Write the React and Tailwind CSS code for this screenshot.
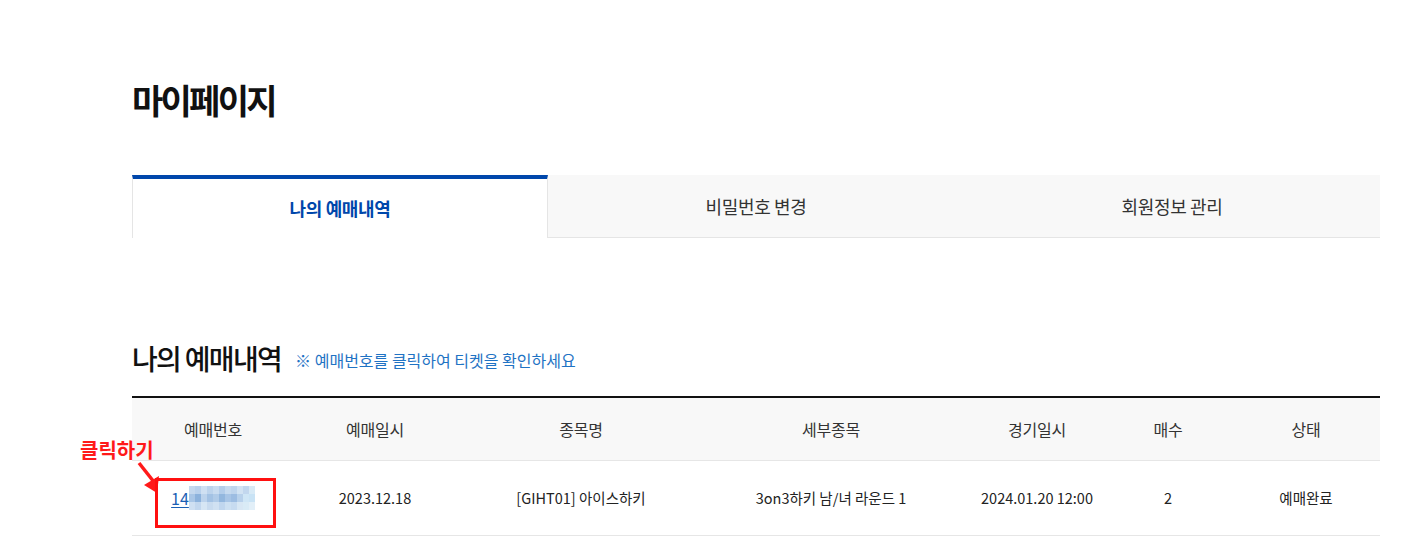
import React from "react";

const tabs = [
  { label: "나의 예매내역", active: true },
  { label: "비밀번호 변경" },
  { label: "회원정보 관리" },
];

const cols = [
  { title: "예매번호", w: "w-[162px]" },
  { title: "예매일시", w: "w-[162px]" },
  { title: "종목명", w: "w-[250px]" },
  { title: "세부종목", w: "w-[250px]" },
  { title: "경기일시", w: "w-[162px]" },
  { title: "매수", w: "w-[100px]" },
  { title: "상태", w: "w-[162px] pl-[14px]" },
];

// pixelated blur over the rest of the booking number
const mosaic = [
  ["#c4d8ee", "#b9d1ec", "#cfe0f2", "#bcd3ec", "#c9dcf0", "#b3cdea", "#c6daef", "#bfd5ed", "#d2e3f3", "#c2d7ee", "#d8eaf6"],
  ["#a9c6e6", "#8cb2dc", "#bcd3ec", "#a3c2e4", "#b0cbe8", "#93b7de", "#a8c5e6", "#9dbde2", "#b8d1eb", "#cfe6f6", "#c9e3f5"],
  ["#cfe0f2", "#c2d7ee", "#d6e6f4", "#c8dbef", "#d0e1f2", "#c0d6ee", "#cde0f2", "#c7dbf0", "#d8e7f4", "#d9ebf6", "#e2eff8"],
];

function App() {
  return (
    <div className="relative w-full h-[539px] overflow-hidden bg-white text-[#222] font-['Noto_Sans_CJK_KR','Noto_Sans',sans-serif]">
      <div className="ml-[132px] w-[1248px] pt-[75px]">
        <h1 className="text-[34px] leading-[50px] font-bold tracking-[-0.08em] text-[#111]">
          마이페이지
        </h1>

        {/* tabs */}
        <div className="mt-[50px] grid grid-cols-3 h-[63px]">
          {tabs.map((t) =>
            t.active ? (
              <div
                key={t.label}
                className="flex items-center justify-center bg-white border-t-4 border-[#0047ab] border-l border-r border-l-[#e5e5e5] border-r-[#e5e5e5] text-[18px] font-bold text-[#0047ab] tracking-[-0.02em]"
              >
                {t.label}
              </div>
            ) : (
              <div
                key={t.label}
                className="flex items-center justify-center bg-[#f8f8f8] border-b border-[#e5e5e5] text-[18px] text-[#333] tracking-[-0.02em]"
              >
                {t.label}
              </div>
            )
          )}
        </div>

        {/* section heading */}
        <div className="mt-[100px] flex items-center gap-[14px] h-[40px]">
          <h2 className="text-[28px] font-medium tracking-[-0.06em] text-[#111]">
            나의 예매내역
          </h2>
          <p className="text-[16px] text-[#1f73c4] pt-[3px]">
            ※ 예매번호를 클릭하여 티켓을 확인하세요
          </p>
        </div>

        {/* table */}
        <div className="mt-[18px] border-t-2 border-[#111]">
          <div className="flex h-[63px] bg-[#f8f8f8] border-b border-[#e6e6e6]">
            {cols.map((c) => (
              <div
                key={c.title}
                className={`${c.w} flex items-center justify-center text-[16px] text-[#333] tracking-[-0.01em]`}
              >
                {c.title}
              </div>
            ))}
          </div>
          <div className="flex h-[75px] border-b border-[#e6e6e6] text-[14.5px] text-[#222]">
            <div className="w-[162px] flex items-center justify-center">
              <a className="inline-flex items-center text-[16px] text-[#1a5fb4]">
                <span className="underline underline-offset-2">14</span>
                <span className="flex flex-col">
                  {mosaic.map((row, i) => (
                    <span key={i} className="flex">
                      {row.map((c, j) => (
                        <span key={j} className="w-[6px] h-[8px]" style={{ backgroundColor: c }} />
                      ))}
                    </span>
                  ))}
                </span>
              </a>
            </div>
            <div className="w-[162px] flex items-center justify-center">2023.12.18</div>
            <div className="w-[250px] flex items-center justify-center">[GIHT01] 아이스하키</div>
            <div className="w-[250px] flex items-center justify-center">3on3하키 남/녀 라운드 1</div>
            <div className="w-[162px] flex items-center justify-center">2024.01.20 12:00</div>
            <div className="w-[100px] flex items-center justify-center">2</div>
            <div className="w-[162px] pl-[14px] flex items-center justify-center">예매완료</div>
          </div>
        </div>
      </div>

      {/* red annotation over the table */}
      <div className="absolute left-[80px] top-[436px] text-[20px] leading-[28px] font-bold text-[#ff1a1a]">
        클릭하기
      </div>
      <svg className="absolute left-[130px] top-[456px]" width="40" height="42" viewBox="0 0 40 42">
        <line x1="9" y1="7" x2="24" y2="26" stroke="#ff1a1a" strokeWidth="3.5" />
        <polygon points="27,37 14,29 29,20" fill="#ff1a1a" />
      </svg>
      <div className="absolute left-[155px] top-[478px] w-[121px] h-[50px] border-[3px] border-[#ff1010]" />
    </div>
  );
}

export default App;
